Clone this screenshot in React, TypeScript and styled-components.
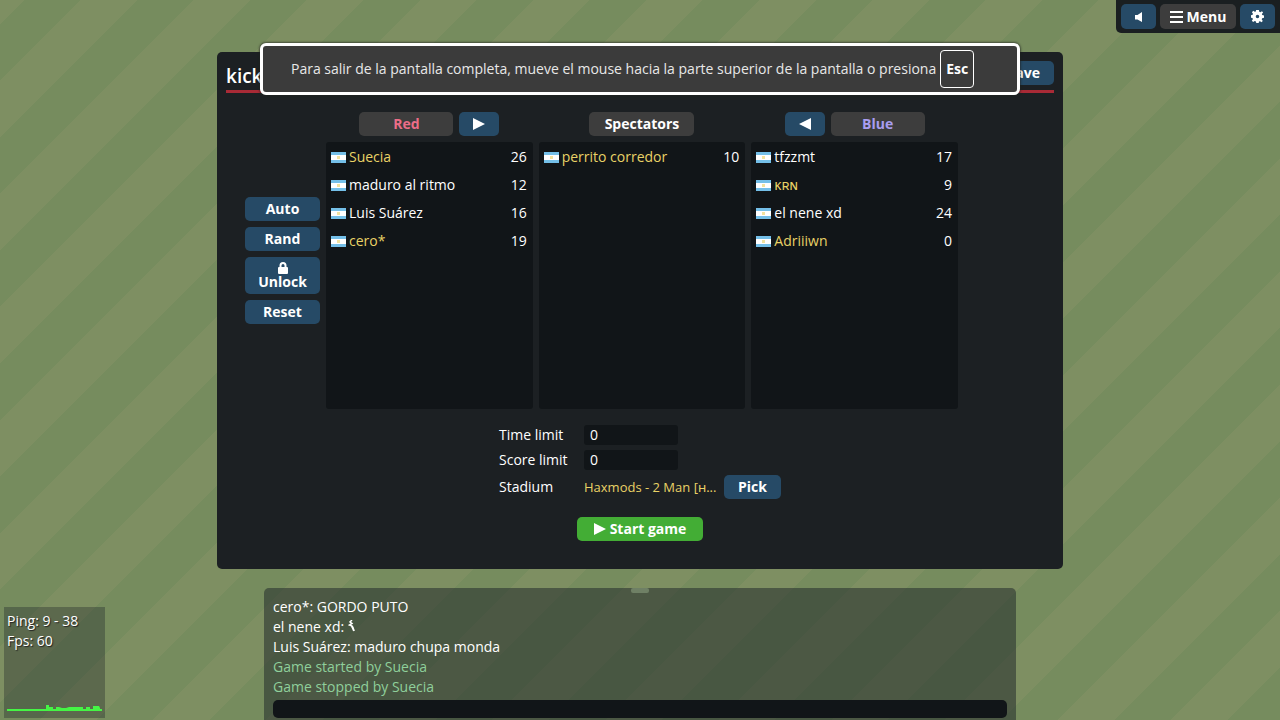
import React from "react";
import styled, { createGlobalStyle } from "styled-components";

const GlobalStyle = createGlobalStyle`
  *, *::before, *::after { box-sizing: border-box; }
  body {
    margin: 0;
    font-family: "Open Sans", "Noto Sans", "DejaVu Sans", sans-serif;
    font-size: 14px;
    line-height: 20px;
    color: #fff;
  }
  svg { flex: none; }
`;

const Game = styled.div`
  position: relative;
  display: flex;
  flex-direction: column;
  align-items: center;
  min-height: 100vh;
  padding-top: 52px;
  background: repeating-linear-gradient(
    135deg,
    #7e8f62 0 17px,
    #768c5e 17px 57px,
    #7e8f62 57px 80px
  );
`;

const Button = styled.button<{ $tone?: "blue" | "grey" | "green"; $ink?: string; $width?: string; $height?: string }>`
  display: inline-flex;
  align-items: center;
  justify-content: center;
  gap: 4px;
  flex: none;
  width: ${(p) => p.$width ?? "auto"};
  height: ${(p) => p.$height ?? "24px"};
  padding: 0 14px;
  border: 0;
  border-radius: 5px;
  background: ${(p) => ({ blue: "#264a66", grey: "#3d3d3d", green: "#43ad35" })[p.$tone ?? "blue"]};
  color: ${(p) => p.$ink ?? "#fff"};
  font: 700 14px/20px "Open Sans", "Noto Sans", sans-serif;
  white-space: nowrap;
  cursor: pointer;
`;

const TopBar = styled.nav`
  position: absolute;
  top: 0;
  right: 0;
  display: flex;
  gap: 4px;
  padding: 4px 5px;
  border-bottom-left-radius: 5px;
  background: #1a1f21;
`;

const BarButton = styled(Button)`
  width: ${(p) => p.$width ?? "35px"};
  height: 25px;
  padding: 0;
`;

const Toast = styled.div`
  position: absolute;
  top: 43px;
  left: 50%;
  transform: translateX(-50%);
  z-index: 2;
  display: flex;
  align-items: center;
  gap: 4px;
  width: 760px;
  max-width: 100%;
  min-height: 52px;
  padding: 0 28px;
  border: 3px solid #fff;
  border-radius: 6px;
  box-shadow: 0 0 2px 1px rgba(30, 34, 30, 0.6);
  background: #3b3b3b;
  color: #e8e8e8;
  white-space: nowrap;
`;

const Key = styled.kbd`
  flex: none;
  padding: 8px 5px;
  border: 1px solid #fff;
  border-radius: 4px;
  color: #fff;
  font: 700 14px/20px "Noto Sans", sans-serif;
`;

const Room = styled.main`
  display: flex;
  flex-direction: column;
  width: 100%;
  max-width: 846px;
  padding: 9px 9px 28px;
  border-radius: 5px;
  background: #1c2023;
`;

const RoomHeader = styled.header`
  display: flex;
  align-items: flex-start;
  justify-content: space-between;
  height: 32px;
  border-bottom: 3px solid #a82a36;
`;

const RoomName = styled.h1`
  margin: 0;
  font: 600 19px/30px "Open Sans", sans-serif;
`;

const Teams = styled.section`
  display: grid;
  grid-template-columns: 94px repeat(3, minmax(0, 1fr)) 90px;
  column-gap: 6px;
  margin-top: 19px;
`;

const Tools = styled.div`
  display: flex;
  flex-direction: column;
  align-self: center;
  gap: 6px;
  padding-left: 19px;
`;

const LockButton = styled(Button)`
  flex-direction: column;
  gap: 0;
  line-height: 15px;
`;

const Team = styled.div`
  display: flex;
  flex-direction: column;
  gap: 6px;
`;

const TeamHead = styled.div`
  display: flex;
  justify-content: center;
  gap: 6px;
`;

const PlayerList = styled.ul`
  height: 267px;
  margin: 0;
  padding: 1px 6px 0 5px;
  border-radius: 3px;
  background: #111518;
  list-style: none;
`;

const Player = styled.li<{ $admin?: boolean }>`
  display: flex;
  align-items: center;
  gap: 3px;
  height: 28px;
  color: ${(p) => (p.$admin ? "#e9d266" : "#fff")};
`;

const PlayerName = styled.span`
  flex: 1;
`;

const Ping = styled.span`
  color: #fff;
`;

const Settings = styled.form`
  display: grid;
  grid-template-columns: 85px 197px;
  grid-template-rows: 20px 20px 24px;
  row-gap: 5px;
  align-items: center;
  align-self: center;
  margin-top: 16px;
`;

const LimitInput = styled.input`
  width: 94px;
  height: 20px;
  padding: 0 6px;
  border: 0;
  border-radius: 3px;
  background: #111518;
  color: #fff;
  font: 14px/20px "Open Sans", sans-serif;
`;

const StadiumValue = styled.div`
  display: flex;
  align-items: center;
  justify-content: space-between;
  color: #e9d266;
  font-size: 13px;
  white-space: nowrap;
`;

const StartButton = styled(Button)`
  align-self: center;
  margin-top: 18px;
`;

const Chat = styled.section`
  position: relative;
  display: flex;
  flex-direction: column;
  gap: 3px;
  width: 100%;
  max-width: 752px;
  margin-top: auto;
  padding: 9px 9px 2px;
  border-radius: 5px 5px 0 0;
  background: rgba(26, 33, 37, 0.5);
`;

const Grip = styled.span`
  position: absolute;
  top: 0;
  left: 50%;
  width: 18px;
  height: 5px;
  margin-left: -9px;
  border-radius: 2px;
  background: #6f8065;
`;

const Line = styled.p<{ $notice?: boolean }>`
  margin: 0;
  color: ${(p) => (p.$notice ? "#8fcf9b" : "#fff")};
`;

const ChatInput = styled.input`
  width: 100%;
  height: 18px;
  padding: 0 6px;
  border: 0;
  border-radius: 5px;
  background: #111518;
  color: #fff;
`;

const Stats = styled.aside`
  position: absolute;
  left: 4px;
  bottom: 2px;
  display: flex;
  flex-direction: column;
  justify-content: space-between;
  width: 101px;
  height: 111px;
  padding: 4px 3px 6px;
  background: rgba(26, 33, 37, 0.34);
  text-shadow: 1px 1px 1px #222;
`;

function Flag() {
  return (
    <svg width="15" height="11" viewBox="0 0 15 11" role="img" aria-label="Argentina">
      <rect width="15" height="11" fill="#74bfe8" />
      <rect y="3" width="15" height="5" fill="#fff" />
      <rect x="6" y="4" width="3" height="3" fill="#f2e3a0" />
    </svg>
  );
}

function Arrow({ flip = false }: { flip?: boolean }) {
  return (
    <svg width="12" height="12" viewBox="0 0 12 12" fill="#fff" aria-hidden="true">
      <path d={flip ? "M12 0v12L0 6z" : "M0 0l12 6L0 12z"} />
    </svg>
  );
}

type Entry = { name: string; ping: number; admin?: boolean };

function Players({ items }: { items: Entry[] }) {
  return (
    <PlayerList>
      {items.map((p) => (
        <Player key={p.name} $admin={p.admin}>
          <Flag />
          <PlayerName>{p.name}</PlayerName>
          <Ping>{p.ping}</Ping>
        </Player>
      ))}
    </PlayerList>
  );
}

const red: Entry[] = [
  { name: "Suecia", ping: 26, admin: true },
  { name: "maduro al ritmo", ping: 12 },
  { name: "Luis Suárez", ping: 16 },
  { name: "cero*", ping: 19, admin: true },
];
const spectators: Entry[] = [{ name: "perrito corredor", ping: 10, admin: true }];
const blue: Entry[] = [
  { name: "tfzzmt", ping: 17 },
  { name: "ᴋʀɴ", ping: 9, admin: true },
  { name: "el nene xd", ping: 24 },
  { name: "Adriiiwn", ping: 0, admin: true },
];

export default function App() {
  return (
    <>
      <GlobalStyle />
      <Game>
        <TopBar>
          <BarButton aria-label="Sound">
            <svg width="8" height="10" viewBox="0 0 8 10" fill="#fff">
              <path d="M0 3h2.500L7 0v10L2.500 7.500H0z" />
            </svg>
          </BarButton>
          <BarButton $tone="grey" $width="76px">
            <svg width="13" height="12" viewBox="0 0 13 12" fill="#fff" aria-hidden="true">
              <path d="M0 0h13v2H0zM0 5h13v2H0zM0 10h13v2H0z" />
            </svg>
            Menu
          </BarButton>
          <BarButton aria-label="Settings">
            <svg width="13" height="13" viewBox="-7 -7 14 14" fill="#fff">
              <path
                fillRule="evenodd"
                d="M-1.500 -7h3l.4 2 1.200.5L4.800 -5.700 6 -4.200 4.700 -2.800 5.100 -1.500 7 -1.200v2.600L5 1.800 4.500 3 5.700 4.800 4.200 6.200 2.800 5 1.600 5.400 1.300 7h-2.600L-1.700 5.400 -3 4.900 -4.700 6 -6.100 4.500 -5 2.900 -5.400 1.600 -7 1.300v-2.700L-5.200 -1.800 -4.900 -3 -6 -4.700 -4.500 -6.100 -3 -5 -1.800 -5.300zM0 -1.900a1.900 1.900 0 1 0 0 3.800a1.900 1.900 0 1 0 0 -3.800z"
              />
            </svg>
          </BarButton>
        </TopBar>

        <Toast role="status">
          <span>
            Para salir de la pantalla completa, mueve el mouse hacia la parte superior de la pantalla o presiona
          </span>
          <Key>Esc</Key>
        </Toast>

        <Room>
          <RoomHeader>
            <RoomName>kick</RoomName>
            <Button>Leave</Button>
          </RoomHeader>

          <Teams>
            <Tools>
              <Button>Auto</Button>
              <Button>Rand</Button>
              <LockButton $height="37px">
                <svg width="10" height="12" viewBox="0 0 10 12" aria-hidden="true">
                  <path d="M2.500 6V3.500a2.500 2.500 0 0 1 5 0V6" fill="none" stroke="#fff" strokeWidth="2" />
                  <rect y="5" width="10" height="7" rx="1" fill="#fff" />
                </svg>
                Unlock
              </LockButton>
              <Button>Reset</Button>
            </Tools>
            <Team>
              <TeamHead>
                <Button $tone="grey" $ink="#ec6d88" $width="94px">Red</Button>
                <Button $width="40px" aria-label="Move to red"><Arrow /></Button>
              </TeamHead>
              <Players items={red} />
            </Team>
            <Team>
              <TeamHead>
                <Button $tone="grey" $width="105px">Spectators</Button>
              </TeamHead>
              <Players items={spectators} />
            </Team>
            <Team>
              <TeamHead>
                <Button $width="40px" aria-label="Move to blue"><Arrow flip /></Button>
                <Button $tone="grey" $ink="#a99df0" $width="94px">Blue</Button>
              </TeamHead>
              <Players items={blue} />
            </Team>
          </Teams>

          <Settings>
            <label htmlFor="time">Time limit</label>
            <LimitInput id="time" defaultValue="0" />
            <label htmlFor="score">Score limit</label>
            <LimitInput id="score" defaultValue="0" />
            <span>Stadium</span>
            <StadiumValue>
              Haxmods - 2 Man [ʜ...
              <Button type="button">Pick</Button>
            </StadiumValue>
          </Settings>
          <StartButton $tone="green" $width="126px">
            <Arrow />
            Start game
          </StartButton>
        </Room>

        <Chat>
          <Grip />
          <div>
            <Line>cero*: GORDO PUTO</Line>
            <Line>
              el nene xd:{" "}
              <svg width="8" height="12" viewBox="0 0 8 12" fill="none" stroke="#fff" aria-hidden="true">
                <path d="M4 0L2 2l2 1.500L1.500 5 4 6l1 3" strokeWidth="1.500" />
                <path d="M4 6l2 5" strokeWidth="2" />
              </svg>
            </Line>
            <Line>Luis Suárez: maduro chupa monda</Line>
            <Line $notice>Game started by Suecia</Line>
            <Line $notice>Game stopped by Suecia</Line>
          </div>
          <ChatInput aria-label="Chat message" />
        </Chat>

        <Stats>
          <div>
            <div>Ping: 9 - 38</div>
            <div>Fps: 60</div>
          </div>
          <svg width="95" height="8" viewBox="0 0 95 8" fill="#45f545" aria-hidden="true">
            <path d="M0 5h39V1h3v2h4v2h3V3h3l3 1h4l3-1h14v2h3V3h4v2h3V2h6l1 2v1h2v2H0z" />
          </svg>
        </Stats>
      </Game>
    </>
  );
}
